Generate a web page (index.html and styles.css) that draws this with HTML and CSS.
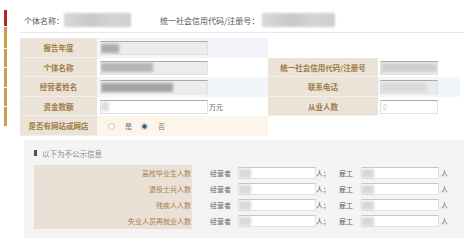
FILE: index.html
```html
<!DOCTYPE html>
<html lang="zh-CN">
<head>
    <meta charset="UTF-8">
    <meta name="viewport" content="width=device-width, initial-scale=1.0">
    <title>个体工商户年度报告</title>
    <link rel="stylesheet" href="styles.css">
</head>
<body>
<div class="page">
    <!-- left step bar -->
    <div class="side">
        <div class="seg red"></div>
        <div class="seg gold s1"></div>
        <div class="seg gold s2"></div>
        <div class="seg gold s3"></div>
        <div class="seg gold s4"></div>
        <div class="seg gold s5"></div>
    </div>

    <div class="main">
        <div class="head">
            <span>个体名称：</span>
            <span class="head-blur first"></span>
            <span>统一社会信用代码/注册号：</span>
            <span class="head-blur"></span>
        </div>

        <div class="info">
            <div class="lbl">报告年度</div>
            <div class="val blue"><div class="field grey"><span class="smear s-year"></span></div></div>
            <div class="empty span2"></div>

            <div class="lbl">个体名称</div>
            <div class="val"><div class="field grey"><span class="smear s-name"></span></div></div>
            <div class="lbl">统一社会信用代码/注册号</div>
            <div class="val right"><div class="field short grey"><span class="smear s-code"></span></div></div>

            <div class="lbl">经营者姓名</div>
            <div class="val blue"><div class="field grey"><span class="smear s-owner"></span></div></div>
            <div class="lbl">联系电话</div>
            <div class="val right blue"><div class="field short grey"><span class="smear s-phone"></span></div></div>

            <div class="lbl">资金数额</div>
            <div class="val"><div class="field"><span class="smear s-fund"></span></div><span class="unit">万元</span></div>
            <div class="lbl">从业人数</div>
            <div class="val right"><div class="field short"><span class="zero">0</span></div></div>

            <div class="lbl">是否有网站或网店</div>
            <div class="val cream">
                <span class="radio"><span class="dot"></span>是</span>
                <span class="radio"><span class="dot on"></span>否</span>
            </div>
            <div class="empty span2"></div>
        </div>

        <div class="private">
            <div class="title"><span class="mark"></span>以下为不公示信息</div>
            <div class="counts">
                <div class="clbl">高校毕业生人数</div>
                <div class="crow">
                    <span class="who">经营者</span>
                    <span class="box"><span class="smear-sm"></span></span>
                    <span class="per">人；</span>
                    <span class="hire">雇工</span>
                    <span class="box"><span class="smear-sm"></span></span>
                    <span class="end">人</span>
                </div>

                <div class="clbl">退役士兵人数</div>
                <div class="crow">
                    <span class="who">经营者</span>
                    <span class="box"><span class="smear-sm"></span></span>
                    <span class="per">人；</span>
                    <span class="hire">雇工</span>
                    <span class="box"><span class="smear-sm"></span></span>
                    <span class="end">人</span>
                </div>

                <div class="clbl">残疾人人数</div>
                <div class="crow">
                    <span class="who">经营者</span>
                    <span class="box"><span class="smear-sm"></span></span>
                    <span class="per">人；</span>
                    <span class="hire">雇工</span>
                    <span class="box"><span class="smear-sm"></span></span>
                    <span class="end">人</span>
                </div>

                <div class="clbl">失业人员再就业人数</div>
                <div class="crow">
                    <span class="who">经营者</span>
                    <span class="box"><span class="smear-sm"></span></span>
                    <span class="per">人；</span>
                    <span class="hire">雇工</span>
                    <span class="box"><span class="smear-sm"></span></span>
                    <span class="end">人</span>
                </div>
            </div>
        </div>
    </div>
</div>
</body>
</html>
```

FILE: styles.css
```css
body {
    margin: 0;
    background: #fff;
    font-family: "Noto Sans CJK SC", "Noto Sans", sans-serif;
    color: #555;
}
.page {
    display: flex;
}

/* left step bar */
.side {
    width: 20px;
    padding: 10px 0 0 4px;
    box-sizing: border-box;
    display: flex;
    flex-direction: column;
    gap: 1px;
}
.seg {
    width: 3px;
}
.seg.red { height: 16px; background: #b7261d; }
.seg.gold { background: #c9a04a; }
.s1 { height: 21px; }
.s2 { height: 18px; }
.s3 { height: 19px; }
.s4 { height: 18px; }
.s5 { height: 19px; }

.main {
    width: 444px;
}

/* header line */
.head {
    display: flex;
    align-items: center;
    height: 24px;
    padding: 8px 0 0 4px;
    border-bottom: 1px solid #e8e8e8;
    font-size: 8px;
    color: #555;
}
.head-blur {
    width: 73px;
    height: 14px;
    margin-left: 3px;
    background: linear-gradient(90deg, #d9d9d9, #c9c9c9 40%, #d3d3d3 70%, #cfcfcf);
    filter: blur(1px);
}
.head-blur.first {
    width: 67px;
    margin: 0 29px 0 0;
}

/* main info grid */
.info {
    display: grid;
    grid-template-columns: 77px 171px 110px 82px;
    grid-template-rows: 20px 19px 20px 19px 20px;
    margin-top: 5px;
    width: 440px;
}
.lbl {
    display: flex;
    align-items: center;
    justify-content: center;
    background: #ebe3d8;
    border-bottom: 1px solid #f3eee7;
    color: #a07a45;
    font-size: 7.5px;
    font-weight: bold;
}
.val {
    display: flex;
    align-items: center;
    padding-left: 3px;
    background: #fff;
    font-size: 7px;
    color: #666;
}
.val.blue { background: #f2f6fa; }
.val.cream { background: #fdf5ea; padding-left: 11px; gap: 9px; }
.val.right { padding-left: 2px; }
.empty { background: #fff; }
.span2 { grid-column: span 2; }

.field {
    display: flex;
    align-items: center;
    width: 108px;
    height: 14px;
    box-sizing: border-box;
    border: 1px solid #e0e0e0;
    border-top-color: #a9a9a9;
    background: #fff;
    overflow: hidden;
}
.field.grey { background: #ececec; }
.field.short { width: 58px; }
.smear {
    height: 9px;
    background: #aaa;
    filter: blur(1.5px);
}
.s-year { width: 18px; }
.s-name { width: 52px; background: #b4b4b4; }
.s-owner { width: 72px; background: #a3a3a3; }
.s-fund { width: 8px; background: #dcdcdc; }
.s-code { width: 56px; background: #cfcfcf; }
.s-phone { width: 46px; background: #dadada; }
.zero {
    padding-left: 2px;
    font-size: 7px;
    color: #ccc;
}
.unit {
    margin-left: 1px;
}

.radio {
    display: inline-flex;
    align-items: center;
    gap: 10px;
    color: #777;
}
.dot {
    width: 5px;
    height: 5px;
    border: 1px solid #c4c4c4;
    border-radius: 50%;
    background: #fff;
}
.dot.on {
    border-color: #b9c4ce;
    background: radial-gradient(circle, #3c5a78 55%, #b9c4ce 60%);
}

/* non-public section */
.private {
    margin: 4px 0 0 4px;
    width: 440px;
    height: 98px;
    box-sizing: border-box;
    padding: 8px 0 0 10px;
    background: #f4f4f4;
}
.title {
    display: flex;
    align-items: center;
    height: 10px;
    font-size: 7.5px;
    color: #888;
}
.mark {
    width: 3px;
    height: 6px;
    margin-right: 5px;
    background: #5b5043;
}
.counts {
    display: grid;
    grid-template-columns: 158px 1fr;
    grid-auto-rows: 16px;
    margin-top: 7px;
}
.clbl {
    padding-right: 1px;
    background: #e9e1d6;
    color: #a58052;
    font-size: 7px;
    line-height: 16px;
    text-align: right;
}
.crow {
    display: flex;
    align-items: center;
    padding-left: 18px;
    font-size: 7px;
    color: #666;
}
.who { width: 28px; }
.box {
    display: flex;
    align-items: center;
    width: 78px;
    height: 12px;
    box-sizing: border-box;
    border: 1px solid #e2e2e2;
    border-top-color: #c6c6c6;
    background: #fff;
}
.smear-sm {
    width: 12px;
    height: 9px;
    background: #d9d9d9;
    filter: blur(1px);
}
.per { width: 23px; }
.hire { width: 22px; }
.end { margin-left: 2px; }
```
